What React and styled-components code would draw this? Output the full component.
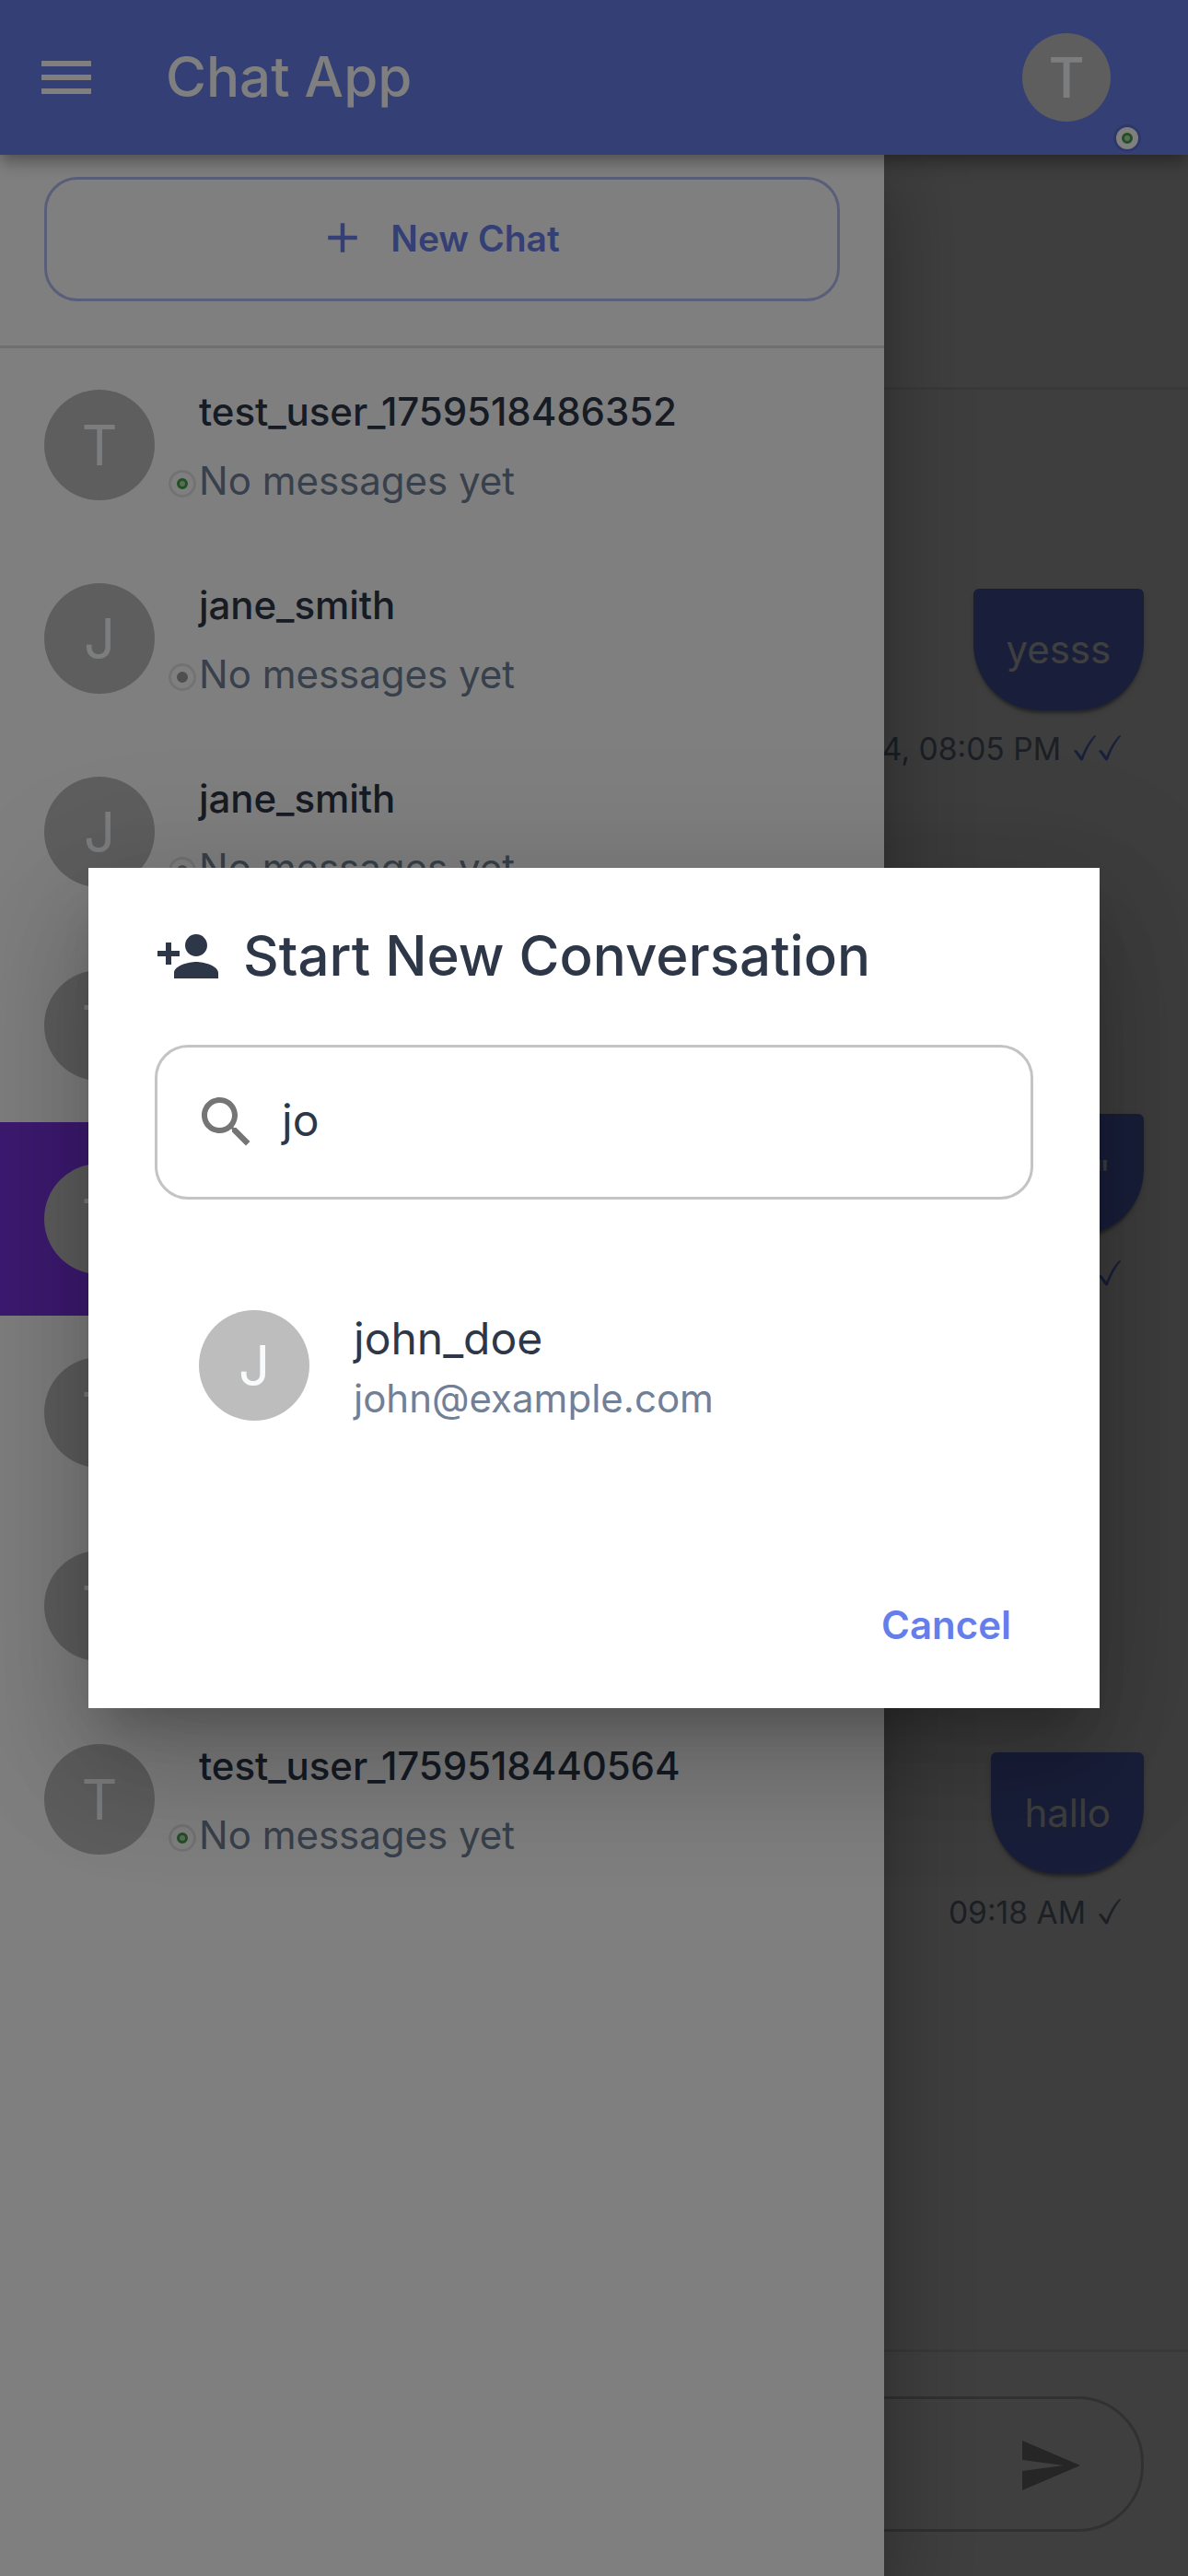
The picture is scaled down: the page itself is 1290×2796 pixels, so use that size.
import React from "react";
import styled, { createGlobalStyle } from "styled-components";

const GlobalStyle = createGlobalStyle`
  *, *::before, *::after { box-sizing: border-box; }
  html, body { margin: 0; padding: 0; }
  body {
    background: #f9f9f9;
    color: #2d3748;
    font-family: Inter, Roboto, "Liberation Sans", sans-serif;
    -webkit-font-smoothing: antialiased;
  }
`;

const Screen = styled.div`
  position: relative;
  display: flex;
  flex-direction: column;
  width: 1290px;
  height: 2796px;
  overflow: hidden;
`;

const Icon = styled.svg`
  display: block;
  flex: none;
  width: ${(p) => p.$size || 72}px;
  height: ${(p) => p.$size || 72}px;
  fill: ${(p) => p.$color || "currentColor"};
`;

/* ---------- app bar ---------- */

const AppBar = styled.header`
  position: relative;
  z-index: 3;
  display: flex;
  align-items: center;
  flex: none;
  height: 168px;
  padding: 0 84px 0 36px;
  background: #667eea;
  color: #fff;
  box-shadow: 0 6px 12px -3px rgba(0, 0, 0, 0.2),
    0 12px 15px 0 rgba(0, 0, 0, 0.14), 0 3px 30px 0 rgba(0, 0, 0, 0.12);
`;

const AppTitle = styled.h1`
  flex: 1;
  margin: 0 0 2px 72px;
  font-size: 60px;
  font-weight: 500;
  line-height: 96px;
`;

const AvatarSlot = styled.div`
  position: relative;
  flex: none;
`;

const Avatar = styled.div`
  display: flex;
  align-items: center;
  justify-content: center;
  width: ${(p) => p.$size || 120}px;
  height: ${(p) => p.$size || 120}px;
  padding-bottom: 1px;
  border-radius: 50%;
  background: #bdbdbd;
  color: #f8fafc;
  font-size: 60px;
  font-weight: ${(p) => p.$weight || 400};
  line-height: 60px;
`;

const Badge = styled.span`
  position: absolute;
  right: ${(p) => p.$right}px;
  bottom: ${(p) => p.$bottom}px;
  display: flex;
  align-items: center;
  justify-content: center;
  width: 30px;
  height: 30px;
  border: 3px solid rgba(0, 0, 0, 0.1);
  border-radius: 50%;
  background: #fff;
  background-clip: padding-box;

  &::before {
    content: "";
    width: 12px;
    height: 12px;
    border: 3px solid ${(p) => (p.$online ? "#43a047" : "#9e9e9e")};
    border-radius: 50%;
    background: ${(p) => (p.$online ? "#b5d6b7" : "#9e9e9e")};
  }
`;

/* ---------- body ---------- */

const Body = styled.div`
  position: relative;
  display: flex;
  flex: 1;
  min-height: 0;
`;

const Drawer = styled.aside`
  position: absolute;
  z-index: 2;
  top: 0;
  bottom: 0;
  left: 0;
  width: 960px;
  background: #fff;
  box-shadow: 0 24px 30px -15px rgba(0, 0, 0, 0.2),
    0 48px 72px 6px rgba(0, 0, 0, 0.14), 0 18px 90px 15px rgba(0, 0, 0, 0.12);
`;

const DrawerBackdrop = styled.div`
  position: absolute;
  inset: 0;
  z-index: 1;
  background: rgba(0, 0, 0, 0.5);
`;

const DrawerHeader = styled.div`
  padding: 24px 48px 48px;
  border-bottom: 3px solid #e0e0e0;
`;

const NewChatButton = styled.button`
  display: flex;
  align-items: center;
  justify-content: center;
  gap: 25px;
  width: 100%;
  height: 135px;
  padding: 0 7px 3px 0;
  border: 3px solid rgba(102, 126, 234, 0.5);
  border-radius: 36px;
  background: none;
  color: #667eea;
  font: 600 39px/68px Inter, Roboto, sans-serif;
`;

const NewChatLabel = styled.span`
  padding-top: 2px;
`;

const ChatList = styled.ul`
  margin: 0;
  padding: 0;
  list-style: none;
`;

const ChatRow = styled.li`
  display: flex;
  align-items: center;
  gap: 48px;
  height: 210px;
  padding: 0 48px;
  background: ${(p) => (p.$selected ? "#7a35e2" : "transparent")};
`;

const ChatText = styled.div`
  display: flex;
  flex-direction: column;
  gap: 12px;
  padding-top: 1px;
  font-size: 42px;
  line-height: 63px;
  white-space: nowrap;
`;

const ChatName = styled.span`
  color: #2d3748;
  font-weight: 500;
  letter-spacing: -0.07px;
`;

const ChatPreview = styled.span`
  color: #718096;
`;

/* ---------- conversation ---------- */

const Conversation = styled.main`
  display: flex;
  flex: 1;
  flex-direction: column;
  min-width: 0;
`;

const ConversationHeader = styled.div`
  flex: none;
  height: 255px;
  border-bottom: 3px solid #e4e4e4;
  background: #fbfbfb;
`;

const Messages = styled.div`
  display: flex;
  flex: 1;
  flex-direction: column;
  align-items: flex-end;
  padding: 216px 48px 0;
`;

const Message = styled.div`
  display: flex;
  flex-direction: column;
  align-items: flex-end;
  height: ${(p) => p.$slot}px;
`;

const Bubble = styled.div`
  padding: 36px;
  border-radius: 6px 6px 72px 72px;
  background: #667eea;
  color: #fff;
  font-size: 42px;
  line-height: 60px;
  letter-spacing: -0.07px;
  white-space: nowrap;
  box-shadow: 0 6px 3px -3px rgba(0, 0, 0, 0.2),
    0 3px 3px 0 rgba(0, 0, 0, 0.14), 0 3px 9px 0 rgba(0, 0, 0, 0.12);
`;

const MessageMeta = styled.div`
  display: flex;
  gap: 14px;
  padding: 16px 25px 0 0;
  color: #718096;
  font-size: 33.6px;
  line-height: 52px;
  white-space: nowrap;
`;

const Receipt = styled.span`
  display: flex;
  gap: 3px;
  padding-top: 11px;
  color: ${(p) => (p.$read ? "#667eea" : "#718096")};
`;

const CheckMark = styled.svg`
  display: block;
  width: 24px;
  height: 28px;
  fill: currentColor;
  stroke: currentColor;
  stroke-width: 0.5;
`;

const Composer = styled.div`
  flex: none;
  padding: 48px;
  border-top: 3px solid #e4e4e4;
  background: #fdfdfd;
`;

const ComposerField = styled.div`
  display: flex;
  align-items: center;
  justify-content: flex-end;
  height: 147px;
  padding: 3px 63px 0 0;
  border: 3px solid #c4c4c4;
  border-radius: 72px;
`;

/* ---------- dialog ---------- */

const DialogLayer = styled.div`
  position: absolute;
  inset: 0;
  z-index: 4;
  display: flex;
  align-items: center;
  justify-content: center;
  background: rgba(0, 0, 0, 0.5);
`;

const Dialog = styled.section`
  display: flex;
  flex-direction: column;
  width: 1098px;
  height: 912px;
  padding: 48px 72px 36px;
  background: #fff;
  box-shadow: 0 33px 45px -21px rgba(0, 0, 0, 0.2),
    0 72px 114px 9px rgba(0, 0, 0, 0.14), 0 27px 138px 24px rgba(0, 0, 0, 0.12);
`;

const DialogTitle = styled.h2`
  display: flex;
  align-items: center;
  gap: 24px;
  height: 96px;
  margin: 0 0 48px;
  font-size: 60px;
  font-weight: 500;
  line-height: 94px;
`;

const TitleText = styled.span`
  padding-bottom: 2px;
`;

const SearchField = styled.div`
  display: flex;
  align-items: center;
  gap: 24px;
  height: 168px;
  padding: 0 39px;
  border: 3px solid #c4c4c4;
  border-radius: 36px;
`;

const SearchValue = styled.span`
  padding-bottom: 5px;
  font-size: 48px;
  line-height: 69px;
`;

const Results = styled.ul`
  flex: 1;
  margin: 48px 0 0;
  padding: 24px 0;
  list-style: none;
`;

const Result = styled.li`
  display: flex;
  align-items: center;
  gap: 48px;
  height: 216px;
  padding: 0 48px;
`;

const ResultText = styled.div`
  display: flex;
  flex-direction: column;
`;

const ResultName = styled.span`
  padding-top: 1px;
  font-size: 48px;
  line-height: 71px;
`;

const ResultEmail = styled.span`
  color: #718096;
  font-size: 42px;
  line-height: 60px;
`;

const Actions = styled.div`
  display: flex;
  justify-content: flex-end;
`;

const CancelButton = styled.button`
  height: 108px;
  padding: 0 24px 2px;
  border: 0;
  background: none;
  color: #667eea;
  font: 600 42px/73px Inter, Roboto, sans-serif;
`;

const paths = {
  menu: "M3 18h18v-2H3zm0-5h18v-2H3zm0-7v2h18V6z",
  add: "M19 13h-6v6h-2v-6H5v-2h6V5h2v6h6z",
  send: "M2.01 21 23 12 2.01 3 2 10l15 2-15 2z",
  personAdd:
    "M15 12c2.21 0 4-1.79 4-4s-1.79-4-4-4-4 1.79-4 4 1.79 4 4 4m-9-2V7H4v3H1v2h3v3h2v-3h3v-2zm9 4c-2.67 0-8 1.34-8 4v2h16v-2c0-2.66-5.33-4-8-4",
  search:
    "M15.5 14h-.79l-.28-.27C15.41 12.59 16 11.11 16 9.5 16 5.91 13.09 3 9.5 3S3 5.91 3 9.5 5.91 16 9.5 16c1.61 0 3.09-.59 4.23-1.57l.27.28v.79l5 4.99L20.49 19zm-6 0C7.01 14 5 11.99 5 9.5S7.01 5 9.5 5 14 7.01 14 9.5 11.99 14 9.5 14",
};

const Glyph = ({ name, size, color }) => (
  <Icon viewBox="0 0 24 24" $size={size} $color={color} aria-hidden="true">
    <path d={paths[name]} />
  </Icon>
);

const Check = () => (
  <CheckMark viewBox="0 0 24 28" aria-hidden="true">
    <path d="M0.3 17.2C1.4 15.8 2.9 16 3.9 17.4L8.4 23.4C12 14.6 16.2 7 21.4 1.4C22.3 0.5 23.2 0.4 24 0.8C18.2 7.6 13.8 15.4 10 26.2C9.6 27.4 7.8 27.6 7 26.5L2.6 20.2C1.8 19.1 1.1 18.2 0.3 17.2Z" />
  </CheckMark>
);

const chats = [
  { name: "test_user_1759518486352", online: true },
  { name: "jane_smith", online: false },
  { name: "jane_smith", online: false },
  { name: "test_user", online: true },
  { name: "test_user", online: true, selected: true },
  { name: "test_user", online: true },
  { name: "test_user", online: true },
  { name: "test_user_1759518440564", online: true },
];

const messages = [
  { text: "yesss", time: "Oct 4, 08:05 PM", read: true, slot: 570 },
  { text: "\"yes\"", time: "Oct 4, 08:06 PM", read: true, slot: 693 },
  { text: "hallo", time: "09:18 AM", read: false, slot: 240 },
];

export default function App() {
  return (
    <Screen>
      <GlobalStyle />
      <AppBar>
        <Glyph name="menu" />
        <AppTitle>Chat App</AppTitle>
        <AvatarSlot>
          <Avatar $size={96} $weight={500}>T</Avatar>
          <Badge $online $right={-33} $bottom={-33} />
        </AvatarSlot>
      </AppBar>

      <Body>
        <Conversation>
          <ConversationHeader />
          <Messages>
            {messages.map((m) => (
              <Message key={m.text} $slot={m.slot}>
                <Bubble>{m.text}</Bubble>
                <MessageMeta>
                  <span>{m.time}</span>
                  <Receipt $read={m.read}>
                    <Check />
                    {m.read && <Check />}
                  </Receipt>
                </MessageMeta>
              </Message>
            ))}
          </Messages>
          <Composer>
            <ComposerField>
              <Glyph name="send" color="#989898" />
            </ComposerField>
          </Composer>
        </Conversation>

        <DrawerBackdrop />
        <Drawer>
          <DrawerHeader>
            <NewChatButton>
              <Glyph name="add" size={54} />
              <NewChatLabel>New Chat</NewChatLabel>
            </NewChatButton>
          </DrawerHeader>
          <ChatList>
            {chats.map((c, i) => (
              <ChatRow key={i} $selected={c.selected}>
                <AvatarSlot>
                  <Avatar>{c.name[0].toUpperCase()}</Avatar>
                  <Badge $online={c.online} $right={-45} $bottom={3} />
                </AvatarSlot>
                <ChatText>
                  <ChatName>{c.name}</ChatName>
                  <ChatPreview>No messages yet</ChatPreview>
                </ChatText>
              </ChatRow>
            ))}
          </ChatList>
        </Drawer>
      </Body>

      <DialogLayer>
        <Dialog>
          <DialogTitle>
            <Glyph name="personAdd" />
            <TitleText>Start New Conversation</TitleText>
          </DialogTitle>
          <SearchField>
            <Glyph name="search" color="#757575" />
            <SearchValue>jo</SearchValue>
          </SearchField>
          <Results>
            <Result>
              <Avatar>J</Avatar>
              <ResultText>
                <ResultName>john_doe</ResultName>
                <ResultEmail>john@example.com</ResultEmail>
              </ResultText>
            </Result>
          </Results>
          <Actions>
            <CancelButton>Cancel</CancelButton>
          </Actions>
        </Dialog>
      </DialogLayer>
    </Screen>
  );
}
